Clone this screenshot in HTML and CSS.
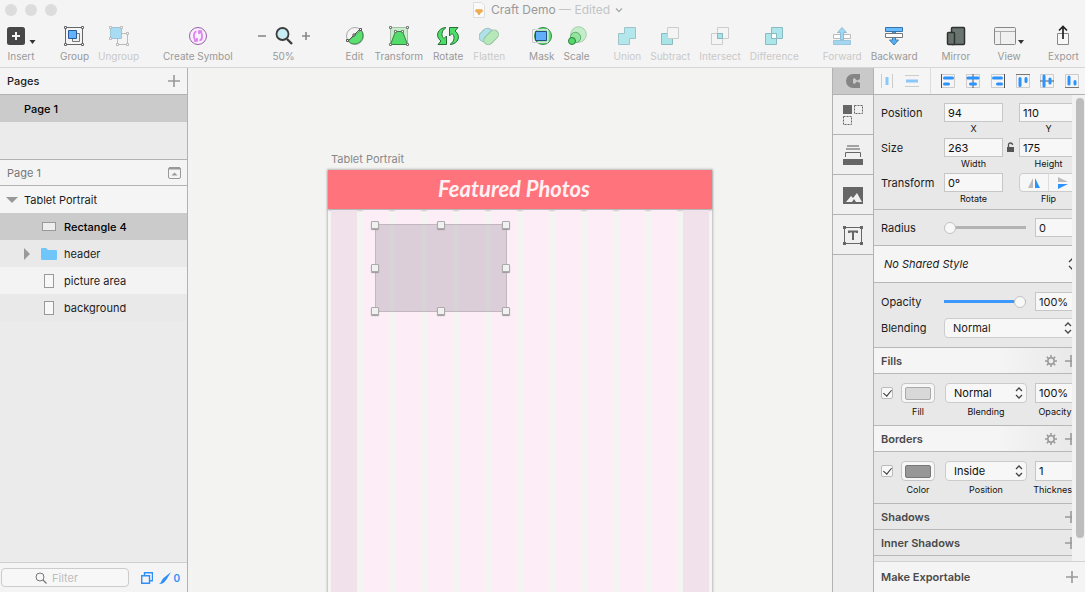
FILE: index.html
```html
<!DOCTYPE html>
<html lang="en">
<head>
<meta charset="utf-8">
<title>Craft Demo</title>
<link rel="stylesheet" href="styles.css">
</head>
<body>
<header class="window-head">
  <div class="titlebar">
    <div class="lights"><i></i><i></i><i></i></div>
    <div class="title">
      <svg width="14" height="16" viewBox="0 0 14 16"><path d="M1.500.5h8l3 3v12h-11z" fill="#fafafa" stroke="#ddd"/><path d="M4 7h6l1 2-4 4-4-4z" fill="#f2b866"/><path d="M3 9h8M5.500 9 7 13l1.500-4" fill="none" stroke="#dd9c42" stroke-width=".6"/></svg>
      <span>Craft Demo <span class="edited">— Edited</span></span>
      <svg width="8" height="6" viewBox="0 0 8 6"><path d="m1 1.500 3 3 3-3" fill="none" stroke="#aaa" stroke-width="1.300"/></svg>
    </div>
  </div>
  <nav class="toolbar">
    <div class="group">
      <button class="tool"><svg width="30" height="24" viewBox="0 0 30 24"><rect x="1" y="3" width="18" height="18" rx="2.500" fill="#474747"/><path d="M10 8v8M6 12h8" stroke="#f4f4f4" stroke-width="2"/><path d="M23.500 16h6l-3 4z" fill="#333"/></svg><span>Insert</span></button>
    </div>
    <div class="group">
      <button class="tool"><svg width="22" height="24" viewBox="0 0 22 24"><path d="M2.500 3.500h17v17h-17z" fill="none" stroke="#666"/><path d="M9.500 9.500h7v8h-7z" fill="#eee" stroke="#777"/><path d="M5.500 6.500h8v8h-8z" fill="#63b0fb" stroke="#275a9b"/><g fill="#fff" stroke="#666"><path d="M1.500 2.500h2v2h-2zM18.500 2.500h2v2h-2zM1.500 19.500h2v2h-2zM18.500 19.500h2v2h-2z"/></g></svg><span>Group</span></button>
      <button class="tool off"><svg width="22" height="24" viewBox="0 0 22 24"><path d="M9.500 9.500h10v11h-10z" fill="#f4f4f4" stroke="#bbb"/><path d="M2.500 3.500h11v11h-11z" fill="#a9dcf3" stroke="#9bc5d7"/><g fill="#fff" stroke="#b9b9b9"><path d="M1.500 2.500h2v2h-2zM12.500 2.500h2v2h-2zM1.500 13.500h2v2h-2zM18.500 8.500h2v2h-2zM8.500 19.500h2v2h-2zM18.500 19.500h2v2h-2z"/></g></svg><span>Ungroup</span></button>
    </div>
    <div class="group">
      <button class="tool"><svg width="20" height="24" viewBox="0 0 20 24"><circle cx="10" cy="12" r="8.500" fill="#f7effa" stroke="#9b5eab"/><path d="M8.500 7.500Q6 8 6 11v2q0 2 2 3.500M6 17h3v-3M11.500 16.500Q14 16 14 13v-2q0-2-2-3.500M14 7h-3v3" fill="none" stroke="#df7cf0" stroke-width="1.700"/></svg><span>Create Symbol</span></button>
    </div>
    <div class="group">
      <div class="tool zoom">
        <div class="zoom-row">
          <button aria-label="Zoom out"><svg width="10" height="24" viewBox="0 0 10 24"><path d="M1 12h8" stroke="#888" stroke-width="1.600"/></svg></button>
          <svg width="20" height="24" viewBox="0 0 20 24"><circle cx="8.500" cy="10" r="6" fill="#c9edf5" stroke="#3c3c3c" stroke-width="1.800"/><path d="m13 15 5 5" stroke="#3c3c3c" stroke-width="2.400"/></svg>
          <button aria-label="Zoom in"><svg width="10" height="24" viewBox="0 0 10 24"><path d="M1 12h8M5 8v8" stroke="#888" stroke-width="1.600"/></svg></button>
        </div>
        <span>50%</span>
      </div>
    </div>
    <div class="group edit">
      <button class="tool"><svg width="20" height="24" viewBox="0 0 20 24"><circle cx="10" cy="12" r="8.500" fill="#f4f4f4" stroke="#aaa"/><path d="M16 6A8.500 8.500 0 1 1 3 17z" fill="#5be070" stroke="#3a8c4a"/><path d="m3 17 12-12" stroke="#555"/><path d="M1.500 15.500h2v2h-2zM8 10h2v2H8zM14.500 4.500h2v2h-2z" fill="#fff" stroke="#555"/></svg><span>Edit</span></button>
      <button class="tool"><svg width="20" height="24" viewBox="0 0 20 24"><path d="M1.500 3.500h17v17h-17z" fill="#c5edc9" stroke="#a4bfa6"/><path d="M6.500 7.500h7l5 13h-17z" fill="#55da6c" stroke="#33833f"/><g fill="#fff" stroke="#777"><path d="M.5 2.500h2v2h-2zM17.500 2.500h2v2h-2zM.5 19.500h2v2h-2zM17.500 19.500h2v2h-2zM5.500 6.500h2v2h-2zM12.500 6.500h2v2h-2z"/></g></svg><span>Transform</span></button>
      <button class="tool"><svg width="24" height="24" viewBox="0 0 24 24"><g fill="#4fdc68" stroke="#276f37"><path d="M10 3.500C1 4-1 13 5 17l-3 3.500h8.500V12L8 14.500C5 12 5 7 10 3.500z"/><path transform="rotate(180 12 12)" d="M10 3.500C1 4-1 13 5 17l-3 3.500h8.500V12L8 14.500C5 12 5 7 10 3.500z"/></g></svg><span>Rotate</span></button>
      <button class="tool off"><svg width="20" height="24" viewBox="0 0 20 24"><g transform="rotate(-45 10 12)"><rect x="1" y="4" width="15" height="10" rx="5" fill="#afe2e8" stroke="#98bfc3"/><rect x="2" y="10" width="17" height="9" rx="4.500" fill="#b5e9ba" stroke="#9bbea0"/></g></svg><span>Flatten</span></button>
    </div>
    <div class="group">
      <button class="tool"><svg width="20" height="24" viewBox="0 0 20 24"><circle cx="11" cy="12" r="8.500" fill="#5ce273" stroke="#3a8450"/><path d="M.5 5.500h15v13H.5z" fill="none" stroke="#ccc"/><path d="M3 6h13v12H6" fill="none" stroke="#eee"/><path d="M3.500 7.500h11v9h-11z" fill="#63aef9" stroke="#234f83"/></svg><span>Mask</span></button>
      <button class="tool"><svg width="20" height="24" viewBox="0 0 20 24"><circle cx="11.500" cy="10.500" r="7.800" fill="#c3edc8" stroke="#a8cdac"/><circle cx="8.500" cy="13.500" r="5.200" fill="#91e59d" stroke="#65a870"/><circle cx="5" cy="17" r="3.500" fill="#53d969" stroke="#317d40"/></svg><span>Scale</span></button>
    </div>
    <div class="group">
      <button class="tool off"><svg width="20" height="24" viewBox="0 0 20 24"><path d="M7.500 3.500h11v11h-6v6h-11v-11h6z" fill="#b4e7ec" stroke="#9cc5ca"/></svg><span>Union</span></button>
      <button class="tool off"><svg width="20" height="24" viewBox="0 0 20 24"><path d="M1.500 9.500h11v11h-11z" fill="#a9e4e9" stroke="#8cbabf"/><path d="M7.500 3.500h11v11h-11z" fill="#f4f4f4" stroke="#ccc"/></svg><span>Subtract</span></button>
      <button class="tool off"><svg width="20" height="24" viewBox="0 0 20 24"><path d="M1.500 9.500h11v11h-11zM7.500 3.500h11v11h-11z" fill="none" stroke="#ccc"/><path d="M7.500 9.500h5v5h-5z" fill="#a9e4e9" stroke="#86b8be"/></svg><span>Intersect</span></button>
      <button class="tool off"><svg width="20" height="24" viewBox="0 0 20 24"><path d="M1.500 9.500h11v11h-11zM7.500 3.500h11v11h-11z" fill="#ace5ea" stroke="#89bbc1"/><path d="M7.500 9.500h5v5h-5z" fill="#fff" stroke="#89bbc1"/></svg><span>Difference</span></button>
    </div>
    <div class="group">
      <button class="tool off"><svg width="20" height="24" viewBox="0 0 20 24"><path d="M1.500 10.500h17v4h-17z" fill="#fff" stroke="#bbb"/><path d="M1.500 16.500h17v4h-17z" fill="#a4d6f1" stroke="#9bc7dd"/><path d="M8.500 16V8.500h-3l4.500-5 4.500 5h-3V16z" fill="#9ed9f4" stroke="#8dbdd5"/></svg><span>Forward</span></button>
      <button class="tool"><svg width="20" height="24" viewBox="0 0 20 24"><path d="M8.500 8v8h-3l4.500 5 4.500-5h-3V8z" fill="#5ab0f5" stroke="#437fae"/><path d="M1.500 3.500h17v4h-17z" fill="#68bcff" stroke="#3474b0"/><path d="M1.500 9.500h17v4h-17z" fill="#fff" stroke="#777"/></svg><span>Backward</span></button>
    </div>
    <div class="group">
      <button class="tool"><svg width="20" height="24" viewBox="0 0 20 24"><rect x="5.500" y="3.500" width="13" height="17" rx="1" fill="#6b7570" stroke="#2e3331" stroke-width="1.500"/><rect x="1.500" y="8.500" width="7" height="12" rx="1" fill="#68726d" stroke="#2e3331" stroke-width="1.500"/></svg><span>Mirror</span></button>
    </div>
    <div class="group">
      <button class="tool"><svg width="30" height="24" viewBox="0 0 30 24"><rect x=".5" y="3.500" width="21" height="17" rx="1" fill="#f0f0f0" stroke="#888"/><path d="M1 7.500h20M6.500 8v12" stroke="#aaa"/><path d="M24 16h6l-3 4z" fill="#333"/></svg><span>View</span></button>
    </div>
    <div class="group">
      <button class="tool"><svg width="14" height="24" viewBox="0 0 14 24"><path d="M1.500 9.500h11v11h-11z" fill="#f7f7f7" stroke="#888"/><path d="M7 15V3M3 6.500l4-4 4 4" fill="none" stroke="#222" stroke-width="1.700"/></svg><span>Export</span></button>
    </div>
  </nav>
</header>

<main class="workspace">
  <aside class="sidebar">
    <div class="bar"><h2>Pages</h2><button aria-label="Add page"><svg width="12" height="12" viewBox="0 0 12 12"><path d="M6 0v12M0 6h12" stroke="#999" stroke-width="1.600"/></svg></button></div>
    <ul class="pages"><li class="row selected">Page 1</li></ul>
    <div class="bar muted"><span>Page 1</span><button aria-label="Collapse pages"><svg width="13" height="12" viewBox="0 0 13 12"><rect x=".5" y=".5" width="12" height="11" rx="1.500" fill="none" stroke="#999"/><path d="M1 1.500h11" stroke="#999" stroke-width="2"/><path d="m3.500 8.500 3-3 3 3z" fill="#999"/></svg></button></div>
    <ul class="layers">
      <li class="row root"><svg width="12" height="6" viewBox="0 0 12 6"><path d="M0 0h12L6 6z" fill="#999"/></svg>Tablet Portrait</li>
      <li class="row child selected"><i></i><svg width="16" height="14" viewBox="0 0 16 14"><rect x="1.500" y="2.500" width="13" height="8" fill="#eee" stroke="#999"/></svg>Rectangle 4</li>
      <li class="row child shade"><svg width="6" height="12" viewBox="0 0 6 12"><path d="M0 0v12l6-6z" fill="#999"/></svg><svg width="16" height="14" viewBox="0 0 16 14"><path d="M0 2q0-1 1-1h4l2 2h8q1 0 1 1v8q0 1-1 1H1q-1 0-1-1z" fill="#70c5f9"/></svg>header</li>
      <li class="row child light"><i></i><svg width="16" height="14" viewBox="0 0 16 14"><rect x="3.500" y=".5" width="9" height="13" fill="#f8f8f8" stroke="#999"/></svg>picture area</li>
      <li class="row child shade"><i></i><svg width="16" height="14" viewBox="0 0 16 14"><rect x="3.500" y=".5" width="9" height="13" fill="#f8f8f8" stroke="#999"/></svg>background</li>
    </ul>
    <div class="filter-bar">
      <label class="filter"><svg width="12" height="12" viewBox="0 0 12 12"><circle cx="5" cy="5" r="4" fill="none" stroke="#777"/><path d="m8 8 3.500 3.500" stroke="#777" stroke-width="1.200"/></svg><input type="text" placeholder="Filter" aria-label="Filter layers"></label>
      <button aria-label="Show slices"><svg width="12" height="12" viewBox="0 0 12 12"><path d="M3.500 3.500V.7h8v8H8.500M.7 3.700h7.800v7.600H.7z" fill="none" stroke="#2f8ffa" stroke-width="1.400"/></svg></button>
      <button class="count"><svg width="12" height="12" viewBox="0 0 12 12"><path d="M12 0 7.500 7.500 5 10.500Q3 12 0 12q2-1 2.500-3L4 6.500z" fill="#2f8ffa"/></svg>0</button>
    </div>
  </aside>

  <section class="canvas">
    <div class="artboard">
      <span class="artboard-name">Tablet Portrait</span>
      <div class="board">
        <div class="board-head">Featured Photos</div>
        <div class="columns"><i></i><i></i><i></i><i></i><i></i><i></i><i></i><i></i><i></i><i></i><i></i><i></i></div>
      </div>
      <div class="selection"><i class="n w"></i><i class="n"></i><i class="n e"></i><i class="w"></i><i class="e"></i><i class="s w"></i><i class="s"></i><i class="s e"></i></div>
    </div>
  </section>

  <nav class="rail">
    <button class="craft" aria-label="Craft"><svg width="16" height="16" viewBox="0 0 16 16"><path d="M8 1v14A7 7 0 0 1 8 1z" fill="#858585"/><path d="M8 1h7v5l-3 1.500L9.500 5 8 6zM8 10l1.500 1L12 8.500 15 10v5H8z" fill="#858585"/></svg></button>
    <button aria-label="Duplicate"><svg width="22" height="22" viewBox="0 0 22 22"><path d="M1 1h9v9H1z" fill="#666"/><path d="M12.500 1.500h8v8h-8zM1.500 12.500h8v8h-8z" fill="none" stroke="#666" stroke-dasharray="2 1"/></svg></button>
    <button aria-label="Library"><svg width="22" height="22" viewBox="0 0 22 22"><path d="M5 2h12M4 5h14" stroke="#888" stroke-width="1.400"/><path d="M3.500 13V8.500h15V13" fill="none" stroke="#666"/><path d="M1 15h20v6H1z" fill="#666"/></svg></button>
    <button aria-label="Photos"><svg width="22" height="22" viewBox="0 0 22 22"><path d="M1 3h20v17H1z" fill="#666"/><path d="m4 18 5-6 2 2 4-5 5 9h-6l-2-3-2 3z" fill="#f0f0f0"/></svg></button>
    <button aria-label="Text"><svg width="22" height="22" viewBox="0 0 22 22"><path d="M2.500 3.500h17v16h-17z" fill="none" stroke="#666"/><path d="M1 2h3v3H1zM18 2h3v3h-3zM1 18h3v3H1zM18 18h3v3h-3z" fill="#666"/><path d="M7 9V7.500h8V9M11 7.500V16" fill="none" stroke="#666" stroke-width="2"/></svg></button>
  </nav>

  <aside class="inspector">
    <div class="align">
      <button class="off" aria-label="Distribute horizontally"><svg width="14" height="14" viewBox="0 0 14 14"><path d="M1.500 0v14M12.500 0v14" stroke="#ccc"/><path d="M7 3v8" stroke="#8ac7fb" stroke-width="3"/></svg></button>
      <button class="off" aria-label="Distribute vertically"><svg width="14" height="14" viewBox="0 0 14 14"><path d="M0 1.500h14M0 12.500h14" stroke="#ccc"/><path d="M1 7h12" stroke="#8ac7fb" stroke-width="3"/></svg></button>
      <span class="split"></span>
      <button aria-label="Align left"><svg width="14" height="14" viewBox="0 0 14 14"><path d="M.5.5h13v13H.5z" fill="none" stroke="#ccc"/><path d="M.5 0v14" stroke="#555"/><path d="M3.500 4h8M3.500 10h4" stroke="#2d93fc" stroke-width="3" stroke-linecap="round"/></svg></button>
      <button aria-label="Align center"><svg width="14" height="14" viewBox="0 0 14 14"><path d="M.5.5h13v13H.5z" fill="none" stroke="#ccc"/><path d="M7 0v14" stroke="#555"/><path d="M2 4h10M4.500 10h5" stroke="#2d93fc" stroke-width="3" stroke-linecap="round"/></svg></button>
      <button aria-label="Align right"><svg width="14" height="14" viewBox="0 0 14 14"><path d="M.5.5h13v13H.5z" fill="none" stroke="#ccc"/><path d="M13.500 0v14" stroke="#555"/><path d="M2.500 4h8M6.500 10h4" stroke="#2d93fc" stroke-width="3" stroke-linecap="round"/></svg></button>
      <button aria-label="Align top"><svg width="14" height="14" viewBox="0 0 14 14"><path d="M.5.5h13v13H.5z" fill="none" stroke="#ccc"/><path d="M0 .5h14" stroke="#777"/><path d="M4 4.500v7M10 4.500v3" stroke="#2d93fc" stroke-width="3" stroke-linecap="round"/></svg></button>
      <button aria-label="Align middle"><svg width="14" height="14" viewBox="0 0 14 14"><path d="M.5.5h13v13H.5z" fill="none" stroke="#ccc"/><path d="M0 7h14" stroke="#555"/><path d="M4 2v10M10 5v4" stroke="#2d93fc" stroke-width="3" stroke-linecap="round"/></svg></button>
      <button aria-label="Align bottom"><svg width="14" height="14" viewBox="0 0 14 14"><path d="M.5.5h13v13H.5z" fill="none" stroke="#ccc"/><path d="M0 13.500h14" stroke="#777"/><path d="M4 3v7M10 7.500v2.500" stroke="#2d93fc" stroke-width="3" stroke-linecap="round"/></svg></button>
    </div>
    <div class="props">
      <div class="scroll">
        <section class="geometry">
          <div class="line"><span class="name">Position</span>
            <label class="field"><input type="text" value="94">X</label><span></span>
            <label class="field"><input type="text" value="110">Y</label></div>
          <div class="line"><span class="name">Size</span>
            <label class="field"><input type="text" value="263">Width</label>
            <svg class="lock" width="8" height="10" viewBox="0 0 8 10"><path d="M0 5h7v5H0z" fill="#555"/><path d="M1.500 5V3q0-2 2-2t2 2" fill="none" stroke="#555" stroke-width="1.300"/></svg>
            <label class="field"><input type="text" value="175">Height</label></div>
          <div class="line"><span class="name">Transform</span>
            <label class="field"><input type="text" value="0º">Rotate</label><span></span>
            <div class="field"><div class="flip"><button aria-label="Flip horizontally"><svg width="14" height="12" viewBox="0 0 14 12"><path d="M6 1v10H1z" fill="#bbb"/><path d="M8 1v10h5z" fill="#2d93fc"/></svg></button><button aria-label="Flip vertically"><svg width="12" height="14" viewBox="0 0 12 14"><path d="M1 1v5h10z" fill="#bbb"/><path d="M1 13V8h10z" fill="#2d93fc"/></svg></button></div>Flip</div></div>
        </section>
        <section class="slide radius"><label for="radius">Radius</label><input id="radius" class="range" type="range" value="0"><input type="text" value="0" aria-label="Radius value"></section>
        <section class="style"><select aria-label="Shared style"><option>No Shared Style</option></select><svg width="8" height="14" viewBox="0 0 8 14"><path d="m1 5 3-3 3 3M1 9l3 3 3-3" fill="none" stroke="#444" stroke-width="1.300"/></svg></section>
        <section class="opacity">
          <div class="slide"><label for="opacity">Opacity</label><input id="opacity" class="range full" type="range" value="100"><input type="text" value="100%" aria-label="Opacity value"></div>
          <div class="blend"><label for="blend">Blending</label><div class="pick"><select id="blend"><option>Normal</option></select><svg width="8" height="14" viewBox="0 0 8 14"><path d="m1 5 3-3 3 3M1 9l3 3 3-3" fill="none" stroke="#444" stroke-width="1.300"/></svg></div></div>
        </section>
        <div class="head open"><h3>Fills</h3><button aria-label="Fill options"><svg width="12" height="12" viewBox="0 0 12 12"><circle cx="6" cy="6" r="3.200" fill="none" stroke="#999" stroke-width="1.500"/><path d="M6 0v2.500M6 9.500V12M0 6h2.500M9.500 6H12M1.800 1.800l1.700 1.700M8.500 8.500l1.700 1.700M1.800 10.200l1.700-1.700M8.500 3.500l1.700-1.700" stroke="#999" stroke-width="1.500"/></svg></button><button aria-label="Add fill"><svg width="12" height="12" viewBox="0 0 12 12"><path d="M6 0v12M0 6h12" stroke="#999" stroke-width="1.600"/></svg></button></div>
        <div class="paint">
          <input type="checkbox" checked aria-label="Fill enabled">
          <div class="field"><button class="swatch" aria-label="Fill color"><i></i></button>Fill</div>
          <label class="field"><span class="pick"><select><option>Normal</option></select><svg width="8" height="14" viewBox="0 0 8 14"><path d="m1 5 3-3 3 3M1 9l3 3 3-3" fill="none" stroke="#444" stroke-width="1.300"/></svg></span>Blending</label>
          <label class="field"><input type="text" value="100%">Opacity</label>
        </div>
        <div class="head open"><h3>Borders</h3><button aria-label="Border options"><svg width="12" height="12" viewBox="0 0 12 12"><circle cx="6" cy="6" r="3.200" fill="none" stroke="#999" stroke-width="1.500"/><path d="M6 0v2.500M6 9.500V12M0 6h2.500M9.500 6H12M1.800 1.800l1.700 1.700M8.500 8.500l1.700 1.700M1.800 10.200l1.700-1.700M8.500 3.500l1.700-1.700" stroke="#999" stroke-width="1.500"/></svg></button><button aria-label="Add border"><svg width="12" height="12" viewBox="0 0 12 12"><path d="M6 0v12M0 6h12" stroke="#999" stroke-width="1.600"/></svg></button></div>
        <div class="paint">
          <input type="checkbox" checked aria-label="Border enabled">
          <div class="field"><button class="swatch dark" aria-label="Border color"><i></i></button>Color</div>
          <label class="field"><span class="pick"><select><option>Inside</option></select><svg width="8" height="14" viewBox="0 0 8 14"><path d="m1 5 3-3 3 3M1 9l3 3 3-3" fill="none" stroke="#444" stroke-width="1.300"/></svg></span>Position</label>
          <label class="field"><input type="text" value="1">Thickness</label>
        </div>
        <div class="head"><h3>Shadows</h3><button aria-label="Add shadow"><svg width="12" height="12" viewBox="0 0 12 12"><path d="M6 0v12M0 6h12" stroke="#999" stroke-width="1.600"/></svg></button></div>
        <div class="head"><h3>Inner Shadows</h3><button aria-label="Add inner shadow"><svg width="12" height="12" viewBox="0 0 12 12"><path d="M6 0v12M0 6h12" stroke="#999" stroke-width="1.600"/></svg></button></div>
      </div>
      <div class="gutter"><div class="thumb"></div></div>
    </div>
    <div class="export"><h3>Make Exportable</h3><button aria-label="Make exportable"><svg width="12" height="12" viewBox="0 0 12 12"><path d="M6 0v12M0 6h12" stroke="#999" stroke-width="1.600"/></svg></button></div>
  </aside>
</main>
</body>
</html>
```

FILE: styles.css
```css
* { box-sizing: border-box; }

body {
  margin: 0;
  height: 100vh;
  overflow: hidden;
  display: flex;
  flex-direction: column;
  font: 11px/16px Inter, "Liberation Sans", sans-serif;
  color: #1c1c1c;
  background: #f4f4f4;
}

button, input, select { font: inherit; color: inherit; margin: 0; }
button { border: 0; padding: 0; background: none; display: flex; align-items: center; justify-content: center; }
svg { display: block; flex: none; }
h2, h3 { margin: 0; font-size: 11px; }
h2 { font-weight: 500; }
h3 { font-weight: 600; color: #4a4a4a; }
ul { list-style: none; margin: 0; padding: 0; }

/* Window header */
.window-head { flex: none; border-bottom: 1px solid #d6d6d6; padding-bottom: 3px; }
.titlebar { display: grid; grid-template-columns: 64px 1fr 64px; align-items: center; height: 20px; }
.lights { display: flex; gap: 8px; padding-left: 5px; }
.lights i { width: 12px; height: 12px; border-radius: 50%; background: #dcdcdc; }
.title { display: flex; gap: 5px; align-items: center; justify-content: center; padding-left: 10px; font-size: 12px; color: #999; }
.title span { font-size: 12px; }
.edited { color: #c4c4c4; }
.toolbar { display: flex; justify-content: space-between; padding: 4px 6px 0; }
.group { display: flex; gap: 9px; }
.group.edit { gap: 10px; margin-left: 10px; }
.tool { display: flex; flex-direction: column; align-items: center; gap: 1px; font-size: 10px; line-height: 14px; color: #999; white-space: nowrap; padding-bottom: 1px; }
.tool.off { color: #c9c9c9; }
.zoom-row { display: flex; gap: 7px; }

.workspace { flex: 1; min-height: 0; display: flex; }

/* Pages and layers */
.sidebar { width: 188px; flex: none; border-right: 1px solid #b2b2b2; display: flex; flex-direction: column; background: #ebebeb; }
.bar { display: flex; align-items: center; justify-content: space-between; height: 27px; padding: 0 7px; background: #f4f4f4; border-bottom: 1px solid #b2b2b2; }
.bar.muted { color: #777; height: 26px; padding-right: 6px; }
.pages { height: 65px; border-bottom: 1px solid #b2b2b2; }
.row { display: flex; align-items: center; height: 27px; padding-left: 24px; }
.row.root { padding-left: 6px; gap: 6px; background: #f5f5f5; }
.row.child { gap: 7px; }
.row.child > :first-child { width: 6px; margin-right: 4px; }
.row.selected { background: #cbcbcb; font-weight: 500; color: #000; }
.row.light { background: #f3f3f3; }
.row.shade { background: #e9e9e9; }
.layers { flex: 1; }
.filter-bar { display: flex; align-items: center; gap: 6px; height: 30px; padding: 0 7px 0 1px; border-top: 1px solid #cfcfcf; background: #f4f4f4; }
.filter { flex: 1; display: flex; align-items: center; gap: 5px; height: 19px; padding-left: 33px; margin-right: 6px; border: 1px solid #ccc; border-radius: 4px; background: #f7f7f7; }
.filter input { flex: 1; width: 0; border: 0; padding: 0; background: none; outline: 0; }
.filter input::placeholder { color: #bdbdbd; opacity: 1; }
.count { gap: 2px; color: #2f8ffa; font-weight: 600; font-size: 10px; }

/* Canvas */
.canvas { flex: 1; min-width: 0; position: relative; overflow: hidden; background: #f3f3f2; }
.artboard { position: absolute; left: 140px; top: 82px; bottom: 0; width: 384px; display: flex; flex-direction: column; }
.artboard-name { padding-left: 3px; line-height: 18px; color: #888; }
.board { flex: 1; margin-top: 2px; display: flex; flex-direction: column; background: #f4f4f3; box-shadow: 0 0 2px 1px #bbb; }
.board-head { height: 39px; text-align: center; font: italic 700 22px/37px Lato, sans-serif; color: #fff0f4; background: #ff747c; padding-right: 12px; box-shadow: 0 1px 2px #999; }
.columns { flex: 1; display: grid; grid-template-columns: repeat(12, 1fr); column-gap: 6px; padding: 1px 3px 0; }
.columns i { background: #fcedf6; }
.columns i:first-child, .columns i:last-child { background: #f0e1ea; }
.selection { position: absolute; left: 47px; top: 74px; width: 132px; height: 88px; background: rgb(160 150 160 / 35%); border: 1px solid #c3b7bf; }
.selection i { position: absolute; left: calc(50% - 4px); top: calc(50% - 4px); width: 8px; height: 8px; border: 1px solid #aaa; border-radius: 1px; background: #f1f1f1; box-shadow: 0 1px 1px #999; }
.selection .n { top: -4px; }
.selection .s { top: calc(100% - 4px); }
.selection .w { left: -5px; }
.selection .e { left: calc(100% - 4px); }

/* Plugin rail */
.rail { width: 42px; flex: none; border-left: 1px solid #b2b2b2; border-right: 1px solid #b2b2b2; background: #ededed; }
.rail button { width: 100%; height: 40px; border-bottom: 1px solid #b2b2b2; background: #f0f0f0; }
.rail .craft { height: 27px; background: #c9c9c9; }

/* Inspector */
.inspector { width: 211px; flex: none; display: flex; flex-direction: column; background: #e8e8e8; }
.align { display: flex; align-items: center; justify-content: space-between; height: 27px; padding: 0 6px; background: #f5f5f5; border-bottom: 1px solid #b2b2b2; }
.split { width: 1px; height: 26px; background: #ddd; }
.props { flex: 1; min-height: 0; display: flex; }
.scroll { flex: 1; min-width: 0; overflow: hidden; }
.gutter { width: 13px; padding: 3px 1px 23px 4px; background: #f2f2f2; }
.thumb { height: 100%; border-radius: 4px; background: #bdbdbd; }

input[type="text"] { height: 19px; }
.field input, .slide input[type="text"] { width: 59px; padding: 0 3px; border: 1px solid #c6c6c6; background: #f7f7f7; }
.field { display: flex; flex-direction: column; align-items: center; font-size: 9px; line-height: 14px; color: #111; }
.field input, .field select { font-size: 11px; }

.geometry { width: 206px; padding: 8px 0 1px 7px; border-bottom: 1px solid #b8b8b8; }
.line { display: grid; grid-template-columns: 63px 59px 16px 59px; height: 35px; }
.name { line-height: 21px; }
.lock { margin: 4px 0 0 4px; }
.flip { display: flex; width: 60px; height: 19px; border: 1px solid #ccc; border-radius: 4px; background: #f7f7f7; }
.flip button { flex: 1; }
.flip button + button { border-left: 1px solid #ddd; }

.slide { display: grid; grid-template-columns: 63px 82px 59px; align-items: center; padding-left: 7px; }
.slide input[type="text"] { margin-left: 9px; }
.radius { width: 220px; height: 36px; border-bottom: 1px solid #b8b8b8; }
.range { appearance: none; width: 82px; height: 14px; background: linear-gradient(#b3b3b3, #b3b3b3) center / 100% 3px no-repeat; }
.range::-webkit-slider-thumb { appearance: none; width: 12px; height: 12px; border: 1px solid #c3c3c3; border-radius: 50%; background: #f8f8f8; }
.range.full { background-image: linear-gradient(#3c98fb, #3c98fb); }

select { appearance: none; width: 100%; border: 0; background: none; padding: 0; outline: 0; }
.style { display: flex; align-items: center; width: 202px; height: 37px; padding-left: 10px; background: #f5f5f5; border-bottom: 1px solid #b8b8b8; font-style: italic; }
.opacity { height: 65px; padding-top: 9px; border-bottom: 1px solid #b8b8b8; }
.blend { display: grid; grid-template-columns: 63px 132px; align-items: center; margin-top: 7px; padding-left: 7px; }
.pick { display: flex; align-items: center; width: 82px; height: 20px; padding: 0 3px 0 8px; border: 1px solid #ccc; border-radius: 4px; background: #f7f7f7; }
.blend .pick { width: 132px; }

.head { display: flex; align-items: center; gap: 8px; width: 204px; height: 26px; padding: 0 1px 0 7px; border-bottom: 1px solid #b8b8b8; }
.head.open { background: linear-gradient(90deg, #f5f5f5 60%, #e8e8e8); }
.head h3 { flex: 1; }
.paint { display: grid; grid-template-columns: 12px 36px 82px 40px; column-gap: 8px; height: 52px; padding: 9px 0 0 7px; border-bottom: 1px solid #b8b8b8; width: 216px; }
.paint .field { justify-content: flex-start; }
.paint .field > input { width: 40px; height: 20px; flex: none; margin-bottom: 2px; }
.paint .field .pick, .swatch { flex: none; margin-bottom: 2px; }
.paint .field:nth-child(2) { width: 34px; }
input[type="checkbox"] { appearance: none; width: 12px; height: 12px; margin-top: 4px; border: 1px solid #bbb; border-radius: 2px; background: #f8f8f8; display: grid; place-items: center; }
input[type="checkbox"]:checked::before { content: ""; width: 4px; height: 7px; margin-bottom: 2px; border: solid #333; border-width: 0 1px 1px 0; transform: rotate(40deg); }
.swatch { width: 34px; height: 20px; border: 1px solid #c6c6c6; border-radius: 4px; background: #f7f7f7; }
.swatch i { width: 26px; height: 13px; border: 1px solid #aaa; border-radius: 2px; background: #d8d8d8; }
.swatch.dark i { border-color: #777; background: #979797; }

.export { display: flex; align-items: center; justify-content: space-between; height: 31px; padding: 0 7px; background: #f4f4f4; border-top: 1px solid #d2d2d2; }
```
